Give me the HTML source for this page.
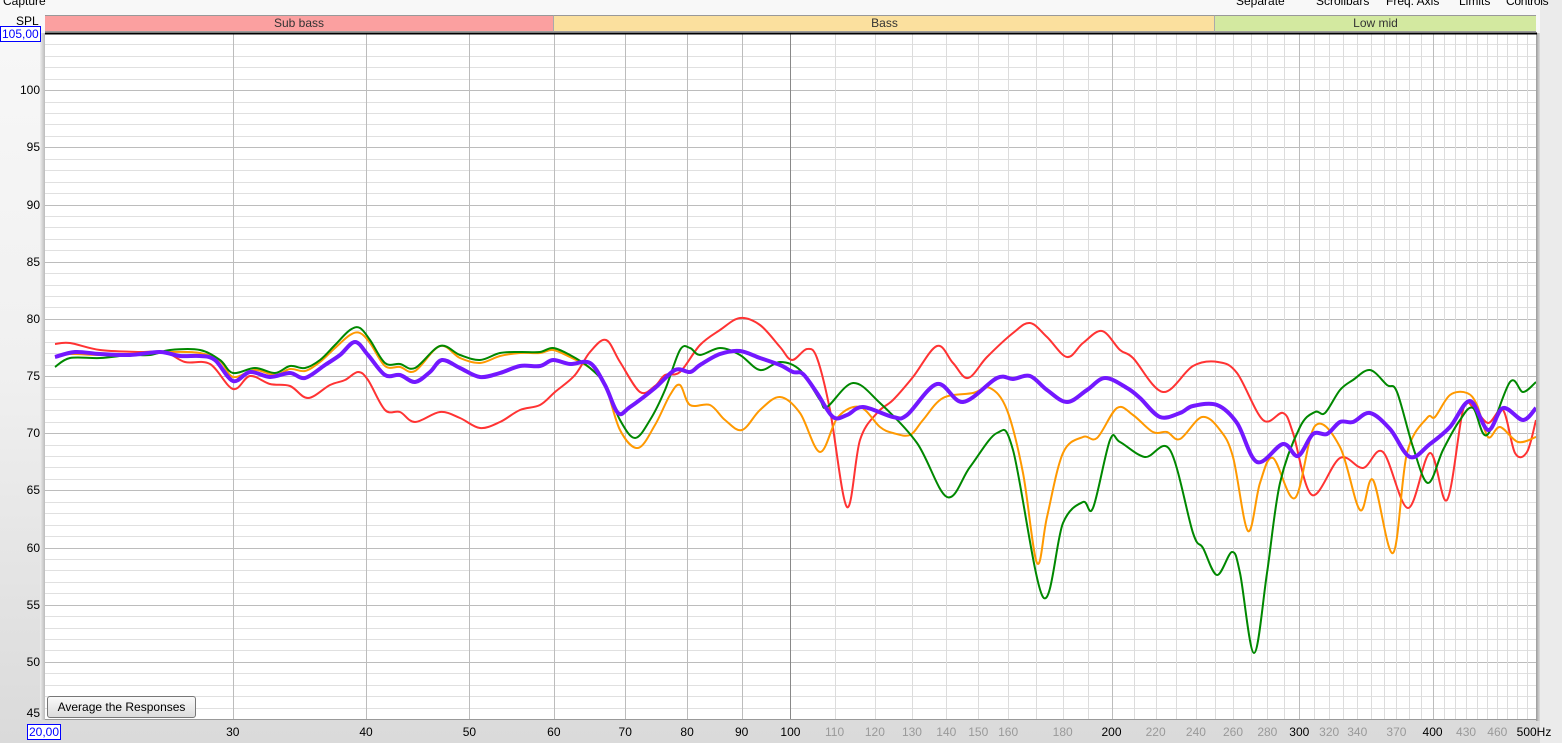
<!DOCTYPE html>
<html><head><meta charset="utf-8"><style>
html,body{margin:0;padding:0}
body{width:1562px;height:743px;overflow:hidden;position:relative;background:linear-gradient(#f8f8f8,#f0f0f0 50%,#dadada);font-family:"Liberation Sans",sans-serif;font-size:12px;color:#000}
.t{position:absolute;white-space:nowrap;font-size:12px;top:-6px;z-index:5}
.band{position:absolute;top:15px;height:15px;border-top:1px solid #999;border-bottom:1px solid #999;font-size:12px;text-align:center;line-height:15px;color:#333}
.yl{position:absolute;right:1522px;font-size:12px;line-height:12px}
.xl{position:absolute;top:725px;font-size:12px;transform:translateX(-50%)}
.g{color:#999}
.box{position:absolute;border:1px solid #00f;color:#00f;background:#fff;font-size:12px;line-height:14px;padding:0 1px}
#btn{position:absolute;left:47px;top:696px;width:147px;height:20px;border:1px solid #777;border-radius:3px;background:linear-gradient(#fafafa,#dcdcdc);font-size:12px;line-height:20px;text-align:center}
</style></head><body>
<div class="t" style="left:3px">Capture</div>
<div class="t" style="left:1236px">Separate</div>
<div class="t" style="left:1316px">Scrollbars</div>
<div class="t" style="left:1386px">Freq. Axis</div>
<div class="t" style="left:1459px">Limits</div>
<div class="t" style="left:1506px;letter-spacing:-0.3px">Controls</div>
<div class="t" style="left:16px;top:14px">SPL</div>
<div class="band" style="left:45px;width:508px;background:#fba0a0">Sub bass</div>
<div class="band" style="left:553px;width:661px;background:#fbe09e;border-left:1px solid #aaa">Bass</div>
<div class="band" style="left:1214px;width:321px;background:#d3e9a0;border-left:1px solid #aaa">Low mid</div>
<div style="position:absolute;left:1536px;top:33px;width:4px;height:688px;background:linear-gradient(90deg,#999,#ddd)"></div>
<div style="position:absolute;left:1540px;top:0;width:22px;height:743px;background:#ebebeb"></div>
<div style="position:absolute;left:40px;top:33px;width:5px;height:687px;background:linear-gradient(90deg,#eee,#bbb)"></div>
<svg id="s" style="position:absolute;left:0;top:0" width="1562" height="743"></svg>
<div class="box" style="left:0;top:26px">105,00</div>
<div class="box" style="left:27px;top:724px">20,00</div>
<div id="yl"></div><div id="xl"></div>
<div id="btn">Average the Responses</div>
<script>
var s=document.getElementById('s');
var X0=45,X1=1536,Y0=33,Y1=719;
function fx(f){return X0+(Math.log10(f/20))*1066.5}
function fy(d){return Y0+(105-d)*(Y1-Y0)/60}
var h='<rect x="45" y="33" width="1491" height="686" fill="#fff"/>';
for(var d=45;d<=105;d++){var y=Math.round(fy(d))+.5;h+='<line x1="45" x2="1536" y1="'+y+'" y2="'+y+'" stroke="'+(d%5?'#e0e0e0':'#bcbcbc')+'"/>';}
var fs=[];for(var f=30;f<=100;f+=10)fs.push(f);for(f=110;f<500;f+=10)fs.push(f);
fs.forEach(function(f){var x=Math.round(fx(f))+.5;var c=f<=100?'#bcbcbc':'#dcdcdc';if(f==100)c='#888';if(f==200||f==300||f==400)c='#bcbcbc';h+='<line y1="33" y2="719" x1="'+x+'" x2="'+x+'" stroke="'+c+'"/>';});
h+='<line x1="45" x2="1537" y1="33.5" y2="33.5" stroke="#000" stroke-width="2"/><line x1="45" x2="1537" y1="719.5" y2="719.5" stroke="#999"/>';
function path(p,c,w){var d='M'+p[0][0]+','+p[0][1];for(var i=0;i<p.length-1;i++){var a=p[i-1]||p[i],b=p[i],c2=p[i+1],e=p[i+2]||c2;d+=' C'+(b[0]+(c2[0]-a[0])/6).toFixed(1)+','+(b[1]+(c2[1]-a[1])/6).toFixed(1)+' '+(c2[0]-(e[0]-b[0])/6).toFixed(1)+','+(c2[1]-(e[1]-b[1])/6).toFixed(1)+' '+c2[0]+','+c2[1];}return '<path d="'+d+'" fill="none" stroke="'+c+'" stroke-width="'+w+'" stroke-linejoin="round"/>';}
var red=[[55,344],[70,343],[100,350],[140,352],[165,352],[185,362],[210,364],[233,389],[250,376],[270,384],[290,386],[308,398],[330,385],[345,380],[358,372],[368,380],[385,410],[400,412],[415,422],[440,412],[460,418],[480,428],[500,422],[520,410],[540,405],[555,392],[575,375],[590,352],[606,340],[620,362],[640,392],[655,386],[665,375],[680,372],[700,345],[720,330],[740,318],[760,325],[780,347],[792,360],[807,349],[817,358],[830,410],[847,507],[860,440],[877,413],[893,400],[913,377],[937,346],[953,363],[968,378],[987,357],[1013,333],[1030,323],[1047,337],[1067,357],[1083,343],[1102,331],[1120,350],[1133,358],[1163,392],[1193,366],[1218,362],[1237,373],[1263,420],[1283,413],[1293,433],[1312,495],[1340,458],[1363,468],[1383,452],[1408,508],[1430,453],[1447,500],[1463,410],[1473,407],[1488,423],[1503,410],[1515,453],[1527,452],[1536,420]];
var green=[[55,367],[70,358],[100,358],[130,355],[150,355],[170,350],[200,350],[220,360],[233,373],[255,368],[275,373],[290,366],[305,368],[320,360],[335,345],[350,330],[360,328],[370,340],[385,363],[400,364],[415,368],[440,346],[460,355],[480,360],[500,353],[520,352],[540,352],[553,348],[570,355],[590,368],[605,385],[620,420],[635,438],[650,420],[665,390],[680,350],[690,348],[700,355],[720,348],[740,355],[760,370],[780,362],[800,370],[820,400],[827,407],[853,383],[880,403],[917,443],[947,497],[970,467],[997,433],[1013,450],[1043,597],[1063,523],[1083,502],[1093,508],[1110,440],[1120,442],[1145,457],[1170,450],[1193,533],[1203,548],[1217,575],[1232,552],[1240,573],[1254,653],[1267,573],[1280,483],[1300,427],[1315,412],[1325,413],[1340,390],[1353,380],[1370,370],[1387,385],[1397,392],[1413,447],[1428,483],[1443,450],[1460,420],[1473,408],[1487,435],[1510,382],[1523,392],[1536,382]];
var orange=[[55,357],[70,354],[100,355],[130,354],[150,354],[170,352],[200,353],[220,361],[233,377],[255,370],[275,375],[290,369],[305,371],[320,362],[335,348],[350,335],[360,333],[370,343],[385,366],[400,367],[415,371],[440,346],[460,358],[480,363],[500,356],[520,353],[540,353],[553,350],[570,357],[590,368],[605,385],[620,430],[638,448],[655,425],[670,395],[680,385],[690,405],[710,405],[725,420],[742,430],[760,410],[780,397],[800,413],[820,452],[838,417],[860,407],[880,427],[893,433],[910,435],[923,420],[943,398],[973,393],[990,388],[1007,410],[1023,473],[1037,563],[1047,517],[1063,453],[1083,437],[1097,438],[1117,408],[1133,415],[1153,432],[1167,432],[1180,439],[1202,417],[1220,430],[1233,457],[1248,531],[1260,483],[1273,458],[1295,498],[1315,426],[1340,447],[1360,510],[1373,480],[1393,553],[1407,453],[1427,418],[1435,417],[1450,395],[1467,393],[1477,405],[1488,437],[1500,427],[1518,442],[1536,437]];
var purple=[[55,357],[75,352],[100,354],[130,355],[160,352],[180,356],[200,356],[215,360],[233,381],[250,372],[270,377],[290,373],[305,378],[325,365],[340,355],[355,342],[368,355],[385,375],[400,375],[415,382],[430,372],[442,360],[460,368],[480,377],[500,373],[520,366],[540,366],[553,360],[570,364],[590,363],[605,385],[618,413],[630,407],[655,388],[675,370],[690,372],[700,365],[720,354],[740,351],[760,358],[780,365],[793,372],[803,374],[817,393],[833,417],[847,415],[863,407],[893,417],[907,415],[937,384],[963,402],[997,378],[1013,379],[1030,376],[1047,390],[1067,402],[1087,390],[1105,378],[1127,388],[1140,398],[1160,417],[1180,413],[1193,406],[1217,405],[1237,423],[1257,462],[1283,444],[1298,456],[1313,434],[1327,434],[1340,422],[1353,422],[1370,413],[1390,429],[1410,457],[1430,444],[1450,427],[1470,401],[1488,430],[1503,408],[1523,420],[1536,408]];
h+='<g clip-path="url(#c)">'+path(red,'#ff3333',2)+path(orange,'#ff9900',2)+path(green,'#008800',2)+path(purple,'#7318ff',4)+'</g><clipPath id="c"><rect x="45" y="34" width="1491" height="685"/></clipPath>';
s.innerHTML=h;
var yh='';for(var d=50;d<=100;d+=5)yh+='<div class="yl" style="top:'+(fy(d)-6)+'px">'+d+'</div>';
yh+='<div class="yl" style="top:707px">45</div>';document.getElementById('yl').innerHTML=yh;
var xs=[[30,0],[40,0],[50,0],[60,0],[70,0],[80,0],[90,0],[100,0],[110,1],[120,1],[130,1],[140,1],[150,1],[160,1],[180,1],[200,0],[220,1],[240,1],[260,1],[280,1],[300,0],[320,1],[340,1],[370,1],[400,0],[430,1],[460,1]];
var xh='';xs.forEach(function(a){xh+='<div class="xl'+(a[1]?' g':'')+'" style="left:'+fx(a[0])+'px">'+a[0]+'</div>';});
xh+='<div class="xl" style="left:1534px">500Hz</div>';document.getElementById('xl').innerHTML=xh;
</script>
</body></html>
